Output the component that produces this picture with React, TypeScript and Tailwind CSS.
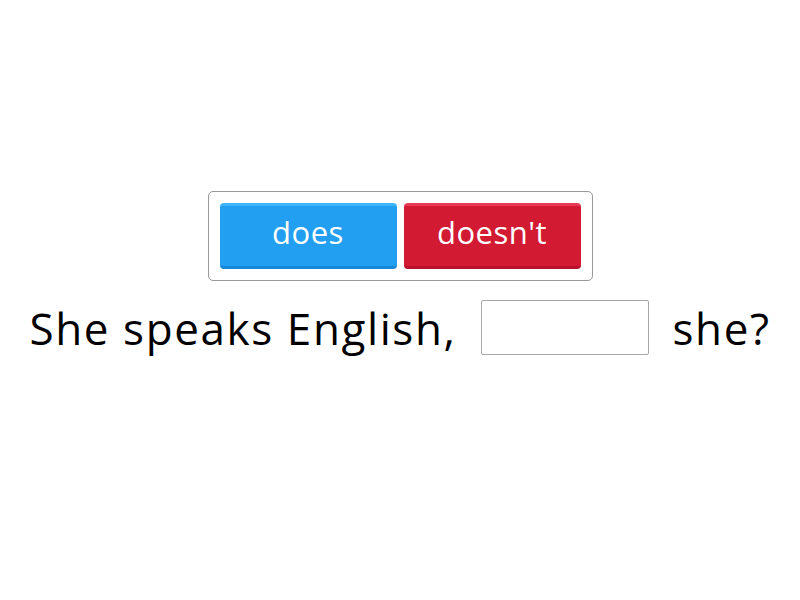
export default function App() {
  return (
    <div className="w-[800px] h-[600px] bg-white flex flex-col items-center pt-[191px] font-['Open_Sans',sans-serif]">
      {/* Answer choices */}
      <div className="flex gap-[7px] p-[11px] border border-[#9a9a9a] rounded-[5px]">
        <button className="w-[177px] h-[66px] rounded-[4px] bg-[#229ff0] border-t-[3px] border-t-[#3cb4fa] border-b-[3px] border-b-[#1688d6] text-white text-[31px] tracking-[0.5px] leading-none pb-[7px]">
          does
        </button>
        <button className="w-[177px] h-[66px] rounded-[4px] bg-[#d21a33] border-t-[3px] border-t-[#e83a52] border-b-[3px] border-b-[#b8112a] text-white text-[31px] tracking-[0.5px] leading-none pb-[7px]">
          doesn't
        </button>
      </div>

      {/* Sentence */}
      <div className="flex items-center mt-[19px] text-[44px] tracking-[1.6px] text-black leading-none">
        <span>She speaks English,</span>
        <div className="w-[168px] h-[55px] mx-[24px] border border-[#a6a6a6] rounded-[2px] bg-white" />
        <span>she?</span>
      </div>
    </div>
  );
}
